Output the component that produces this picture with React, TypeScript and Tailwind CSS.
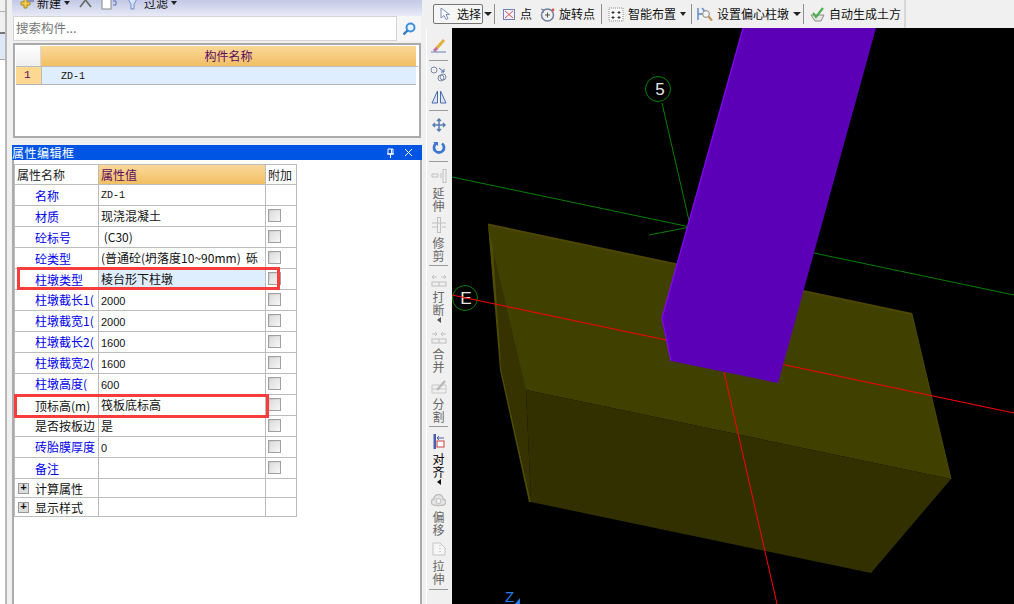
import type { ReactNode } from "react";

const cjk = "font-['Noto_Sans_CJK_SC','Liberation_Sans',sans-serif]";

interface Row {
  label: string;
  value?: string;
  h?: string;
  black?: boolean;
  low?: boolean;
  noCheck?: boolean;
  mono?: boolean;
  num?: boolean;
  selected?: boolean;
}

const rows: Row[] = [
  { label: "名称", value: "ZD-1", low: true, noCheck: true, mono: true },
  { label: "材质", value: "现浇混凝土", low: true },
  { label: "砼标号", value: " (C30)", low: true },
  { label: "砼类型", value: "(普通砼(坍落度10~90mm)  砾", low: true },
  { label: "柱墩类型", value: "棱台形下柱墩", low: true, selected: true },
  { label: "柱墩截长1(", value: "2000", num: true },
  { label: "柱墩截宽1(", value: "2000", num: true },
  { label: "柱墩截长2(", value: "1600", num: true },
  { label: "柱墩截宽2(", value: "1600", num: true },
  { label: "柱墩高度(", value: "600", num: true },
  { label: "顶标高(m)", value: "筏板底标高", black: true, low: true },
  { label: "是否按板边", value: "是", black: true },
  { label: "砖胎膜厚度", value: "0", num: true },
  { label: "备注", low: true },
];

function Check() {
  return (
    <span className="block w-[13px] h-[13px] border border-[#a0a0a0] bg-gradient-to-br from-[#c8c8c8] to-[#fafafa] p-[1px]">
      <span className="block w-full h-full bg-gradient-to-br from-[#dcdcdc] to-[#f4f4f4]" />
    </span>
  );
}

function PropRow({ row }: { row: Row }) {
  const labelColor = row.black ? "text-[#111]" : "text-[#0000ee]";
  return (
    <div className="grid grid-cols-[84px_167px_31px] h-[21px] border-b border-[#bcbcbc]">
      <div className={`pl-[20px] border-r border-[#bcbcbc] whitespace-nowrap overflow-hidden leading-[20px] ${labelColor} ${row.low ? "pt-[1px]" : ""}`}>
        {row.label}
      </div>
      <div
        className={`pl-[2px] border-r border-[#bcbcbc] whitespace-pre overflow-hidden leading-[20px] text-[#111] ${row.selected ? "bg-[#dfeeff]" : ""} ${row.num ? "font-['Liberation_Sans'] text-[11px] pt-[1px]" : ""} ${row.mono ? "font-['Liberation_Mono'] text-[10px] pt-[1px]" : ""}`}
      >
        {row.value}
      </div>
      <div className="border-r border-[#bcbcbc] pl-[2px] pt-[3px]">{row.noCheck ? null : <Check />}</div>
    </div>
  );
}

function GroupRow({ label }: { label: string }) {
  return (
    <div className="grid grid-cols-[84px_167px_31px] h-[19px] border-b border-[#bcbcbc]">
      <div className="flex items-center pl-[3px] border-r border-[#bcbcbc] text-[#111]">
        <span className="flex items-center justify-center w-[11px] h-[11px] border border-[#999] bg-[#dcdcdc] text-[11px] leading-none font-['Liberation_Mono'] font-bold">
          +
        </span>
        <span className="ml-[6px] mt-[1px]">{label}</span>
      </div>
      <div className="border-r border-[#bcbcbc]" />
      <div className="border-r border-[#bcbcbc]" />
    </div>
  );
}

function Sep() {
  return <div className="w-px h-[20px] bg-[#8f8f8f]" />;
}

function Caret({ className = "" }: { className?: string }) {
  return <span className={`block w-0 h-0 border-x-[3px] border-x-transparent border-t-[4px] border-t-[#222] ${className}`} />;
}

function Tool({ icon, label, mt, dark }: { icon: ReactNode; label?: string; mt: string; dark?: boolean }) {
  return (
    <div className={`flex flex-col items-center ${mt}`}>
      {icon}
      {label && (
        <div className={`w-[12px] mt-[3px] text-center leading-[13px] text-[12px] ${dark ? "text-black" : "text-[#666]"}`}>{label}</div>
      )}
    </div>
  );
}

function VSep({ mt }: { mt: string }) {
  return <div className={`w-[19px] h-px bg-[#9a9a9a] ${mt}`} />;
}

function Ico({ children, w = 16, h = 15 }: { children: ReactNode; w?: number; h?: number }) {
  return (
    <svg width={w} height={h} viewBox={`0 0 ${w} ${h}`} fill="none" className="block shrink-0">
      {children}
    </svg>
  );
}

function Scene() {
  return (
    <svg viewBox="452 28 562 576" width={562} height={576} className="block bg-black">
      <line x1="452" y1="177" x2="1014" y2="295" stroke="#008000" />
      <line x1="649" y1="235" x2="690" y2="227" stroke="#008000" />
      <line x1="662" y1="103" x2="690" y2="225" stroke="#008000" />
      <circle cx="658" cy="89" r="12.5" stroke="#008000" fill="none" />
      <circle cx="465" cy="298" r="12.5" stroke="#008000" fill="none" />
      <text x="660" y="95" fill="#e8e8e8" fontSize="17" textAnchor="middle" fontFamily="Liberation Sans">5</text>
      <text x="466" y="304" fill="#e8e8e8" fontSize="17" textAnchor="middle" fontFamily="Liberation Sans">E</text>

      <polygon points="488,224 912,314 951,479 526,390 501,367" fill="#404000" />
      <polygon points="526,390 951,479 871,573 531,502" fill="#333000" />
      <polygon points="493,250 526,390 531,502 501,367" fill="#363300" />
      <polygon points="488,224 493,250 501,367 531,502 529,502 500,370" fill="#4f4d00" />
      <polyline points="488,224.5 912,314" stroke="#4d4600" strokeWidth="2" fill="none" />
      <polyline points="912,314 951,479" stroke="#4a4a00" fill="none" />

      <line x1="452" y1="295" x2="1014" y2="413" stroke="#ff0000" />
      <line x1="724" y1="372" x2="777" y2="604" stroke="#ff0000" />

      <polygon points="743,28 876,28 778,383 671,361 662,318" fill="#5c00b8" />
      <polyline points="743,28 662,318 671,361" stroke="#8a00ff" strokeWidth="1.2" fill="none" />

      <text x="505" y="602" fill="#1e7ff0" fontSize="15" fontFamily="Liberation Sans">Z</text>
      <polygon points="520,598 520,604 515,604" fill="#1e7ff0" />
    </svg>
  );
}

export default function App() {
  return (
    <div className={`relative flex w-[1014px] h-[604px] overflow-hidden bg-[#f0f0f0] text-[12px] ${cjk}`}>
      {/* left strip */}
      <div className="w-[12px] flex flex-col shrink-0">
        <div className="flex h-full">
          <div className="w-[7px] flex flex-col border-r-2 border-[#b8b8b8]">
            <div className="h-[12px] bg-[#f0f0f0] border-b border-[#b0b0b0]" />
            <div className="h-[22px] bg-[#f0f0f0] border-b-2 border-[#777]" />
            <div className="h-[26px] bg-[#dfe6f5] border-b border-[#aaa]" />
            <div className="flex-1 bg-white" />
          </div>
          <div className="flex-1 bg-[#f0f0f0]" />
        </div>
      </div>

      {/* component list + properties */}
      <div className="w-[410px] shrink-0 flex flex-col">
        <div className="h-[16px] overflow-hidden bg-gradient-to-b from-[#c3c9e6] to-[#e8eaf6] shrink-0">
          <div className="flex items-center h-[16px] -mt-[5px] text-[#111] pl-[6px]">
            <Ico w={16} h={14}>
              <path d="M6 3h3v3h3v3H9v3H6V9H3V6h3z" fill="#f2c84a" stroke="#a98a22" />
              <path d="M9 5h7" stroke="#8a93b5" strokeWidth="2" />
            </Ico>
            <span className="ml-[3px]">新建</span>
            <Caret className="ml-[3px]" />
            <span className="ml-[9px]">
              <Ico w={13} h={12}>
                <path d="M1 10 6.5 3 12 10" stroke="#666" strokeWidth="1.6" />
              </Ico>
            </span>
            <span className="ml-[9px]">
              <Ico w={16} h={14}>
                <rect x="1" y="3" width="9" height="10" stroke="#888" fill="#fff" />
                <path d="M12 5h3v4h-3" stroke="#5a73c0" />
              </Ico>
            </span>
            <span className="ml-[10px]">
              <Ico w={11} h={14}>
                <path d="M1 3h9L7 8v5H4V8z" stroke="#6f8fd0" fill="#d8e4f8" />
              </Ico>
            </span>
            <span className="ml-[6px]">过滤</span>
            <Caret className="ml-[3px]" />
          </div>
        </div>

        <div className="h-[25px] flex shrink-0 pl-[1px] pr-[1px]">
          <div className="w-[384px] h-full bg-white border border-[#d4d4d4] pl-[2px] text-[#777] text-[12.5px] leading-[22px]">搜索构件...</div>
          <div className="flex-1 flex items-center justify-center bg-[#f6f6f6]">
            <svg width="14" height="14" viewBox="0 0 14 14" fill="none">
              <circle cx="8.5" cy="5.5" r="4" stroke="#3d8fe0" strokeWidth="2" fill="#e8f4ff" />
              <path d="M5.5 8.5 1.5 12.5" stroke="#2f78c8" strokeWidth="2.4" />
            </svg>
          </div>
        </div>

        <div className="h-[2px] shrink-0" />

        <div className="h-[95px] shrink-0 ml-[1px] w-[408px] bg-white border-2 border-[#ababab] p-[1px]">
          <div className="flex h-[21px] border-b border-[#bcbcbc]">
            <div className="w-[25px] border-r border-[#d8d8d8] bg-gradient-to-b from-[#ffffff] to-[#eeeeee]" />
            <div className="flex-1 bg-gradient-to-b from-[#fbd898] to-[#f1bf63] text-center leading-[19px] text-[#5c0a63] mr-[2px]">构件名称</div>
          </div>
          <div className="flex h-[18px] border-b border-[#b5b5b5] mr-[2px]">
            <div className="w-[25px] bg-[#fdd890] text-[#5c0a63] font-['Liberation_Mono'] text-[11px] leading-[17px] pl-[8px]">1</div>
            <div className="flex-1 bg-[#dfeeff] border-l border-[#bcbcbc] pl-[19px] font-['Liberation_Mono'] text-[10px] leading-[19px] text-[#111]">ZD-1</div>
          </div>
        </div>

        <div className="h-[7px] shrink-0" />

        <div className="h-[15px] shrink-0 bg-[#0055e5] text-white flex items-center pr-[9px]">
          <span className="tracking-[0.5px] leading-none">属性编辑框</span>
          <svg width="9" height="10" viewBox="0 0 9 10" fill="none" className="ml-auto">
            <path d="M2 1h5v5H2zM1 6h7M4.5 6v4M5.5 1v5" stroke="#fff" />
          </svg>
          <svg width="9" height="9" viewBox="0 0 9 9" fill="none" className="ml-[9px]">
            <path d="M1 1l7 7M8 1 1 8" stroke="#fff" />
          </svg>
        </div>

        <div className="flex-1 bg-white border-x-2 border-[#ababab] pt-[4px]">
          <div className="w-[283px] border-l border-t border-[#bcbcbc]">
            <div className="grid grid-cols-[84px_167px_31px] h-[20px] border-b border-[#bcbcbc]">
              <div className="pl-[2px] border-r border-[#bcbcbc] text-[#222] leading-[19px]">属性名称</div>
              <div className="pl-[2px] border-r border-[#bcbcbc] bg-gradient-to-b from-[#fbd898] to-[#f1bf63] text-[#5c0a63] leading-[19px]">属性值</div>
              <div className="pl-[2px] border-r border-[#bcbcbc] text-[#222] leading-[19px]">附加</div>
            </div>
            {rows.map((row) => (
              <PropRow key={row.label} row={row} />
            ))}
            <GroupRow label="计算属性" />
            <GroupRow label="显示样式" />
          </div>
        </div>
      </div>

      <div className="w-[4px] shrink-0 bg-[#f0f0f0]" />

      {/* right side */}
      <div className="flex-1 flex flex-col min-w-0">
        <div className="h-[28px] shrink-0 flex items-center text-[#111] whitespace-nowrap">
          <div className="w-[480px] h-[28px] flex items-center border-r-2 border-[#d6d6d6] pl-[7px]">
            <div className="flex items-center shrink-0 w-[50px] h-[20px] border border-[#777] rounded-[2px] bg-[#f6f6f6] pl-[6px]">
              <svg width="10" height="14" viewBox="0 0 10 14" fill="none" className="shrink-0">
                <path d="M1 1v10l3-2.5 2 4 2-1-2-4h3.5z" fill="#fff" stroke="#7d8fb8" />
              </svg>
              <span className="ml-[7px]">选择</span>
            </div>
            <Caret className="ml-[1px] mr-[1px] border-x-[4px]" />
            <span className="ml-[1px]"><Sep /></span>
            <span className="ml-[8px]">
              <Ico w={12} h={13}>
                <rect x="0.5" y="1.5" width="11" height="10" stroke="#7480b8" fill="#eef0fa" />
                <path d="M2 3l8 7M10 3l-8 7" stroke="#d85050" />
              </Ico>
            </span>
            <span className="ml-[5px]">点</span>
            <span className="ml-[8px]">
              <Ico w={15} h={15}>
                <circle cx="7.5" cy="8" r="6" stroke="#6f7f9f" strokeWidth="1.5" />
                <path d="M7.5 5.5v5M5 8h5" stroke="#555" />
                <path d="M1 2l3 1-1 3" stroke="#6f7f9f" />
                <circle cx="13" cy="3" r="1.4" fill="#d85050" />
              </Ico>
            </span>
            <span className="ml-[4px]">旋转点</span>
            <span className="ml-[6px]"><Sep /></span>
            <span className="ml-[6px]">
              <Ico w={16} h={15}>
                <rect x="1" y="1" width="14" height="13" stroke="#8a8a8a" strokeDasharray="1 1" fill="#f8f8f8" />
                <path d="M5 4v3M3.5 5.5h3M11 4v3M9.5 5.5h3M5 9v3M3.5 10.5h3M11 9v3M9.5 10.5h3" stroke="#333" />
              </Ico>
            </span>
            <span className="ml-[4px]">智能布置</span>
            <Caret className="ml-[4px]" />
            <span className="ml-[5px]"><Sep /></span>
            <span className="ml-[5px]">
              <Ico w={16} h={16}>
                <path d="M1 2v12M1 8h5M5 2l6 7" stroke="#5a83c8" strokeWidth="1.4" />
                <circle cx="9" cy="8" r="3.4" stroke="#888" fill="#f4f4f4" />
                <path d="M11.5 10.5l3.5 4" stroke="#c89050" strokeWidth="2" />
              </Ico>
            </span>
            <span className="ml-[4px]">设置偏心柱墩</span>
            <Caret className="ml-[4px] border-x-[4px]" />
            <span className="ml-[2px]"><Sep /></span>
            <span className="ml-[6px]">
              <Ico w={15} h={15}>
                <path d="M1 8l4 6h6l3-6z" stroke="#8a8a8a" fill="#e6e6e6" />
                <path d="M3 6l3 4 7-9" stroke="#4fb04f" strokeWidth="2.2" />
              </Ico>
            </span>
            <span className="ml-[4px]">自动生成土方</span>
          </div>
        </div>

        <div className="flex-1 flex min-h-0">
          <div className="w-[26px] shrink-0 bg-[#f0f0f0] flex flex-col items-center overflow-hidden border-l border-white pr-[2px]">
            <Tool
              mt="mt-[10px]"
              icon={
                <Ico w={17} h={15}>
                  <path d="M1 14h15" stroke="#6b7fb0" />
                  <path d="M6 11 14 2" stroke="#e0b040" strokeWidth="3" />
                  <path d="M4 13l3-3" stroke="#c070a0" strokeWidth="3" />
                </Ico>
              }
            />
            <VSep mt="mt-[7px]" />
            <Tool
              mt="mt-[5px]"
              icon={
                <Ico w={17} h={17}>
                  <circle cx="4" cy="4" r="3" stroke="#7a8aa8" />
                  <circle cx="11" cy="12" r="3" stroke="#7a8aa8" />
                  <circle cx="13" cy="11" r="3" stroke="#7a8aa8" />
                  <path d="M9 2l5 4M14 3v3h-3" stroke="#4a6db0" />
                </Ico>
              }
            />
            <Tool
              mt="mt-[7px]"
              icon={
                <Ico w={16} h={14}>
                  <path d="M6.5 1v12H1zM9.5 1v12H15z" stroke="#4a6db0" fill="#dfe7f6" />
                </Ico>
              }
            />
            <VSep mt="mt-[6px]" />
            <Tool
              mt="mt-[7px]"
              icon={
                <Ico w={14} h={14}>
                  <path d="M7 1v12M1 7h12M5 3l2-2 2 2M5 11l2 2 2-2M3 5 1 7l2 2M11 5l2 2-2 2" stroke="#5a7db0" strokeWidth="1.5" />
                </Ico>
              }
            />
            <Tool
              mt="mt-[8px]"
              icon={
                <Ico w={14} h={14}>
                  <path d="M4 3.5a5 5 0 1 0 6 0" stroke="#3d78d0" strokeWidth="2.8" />
                  <path d="M1 2h5v4z" fill="#3d78d0" />
                </Ico>
              }
            />
            <VSep mt="mt-[7px]" />
            <Tool
              mt="mt-[7px]"
              label="延伸"
              icon={
                <Ico w={16} h={14}>
                  <path d="M1 5h6v3H1zM10 4v5" stroke="#c0c0c0" />
                  <rect x="12" y="0.5" width="3" height="13" stroke="#c0c0c0" />
                </Ico>
              }
            />
            <Tool
              mt="mt-[5px]"
              label="修剪"
              icon={
                <Ico w={16} h={16}>
                  <path d="M1 6h14M1 10h6M11 10h4" stroke="#c0c0c0" />
                  <rect x="6.5" y="0.5" width="3" height="15" stroke="#c0c0c0" />
                </Ico>
              }
            />
            <VSep mt="mt-[3px]" />
            <Tool
              mt="mt-[8px]"
              label="打断"
              icon={
                <Ico w={16} h={13}>
                  <path d="M1 3h5M3 1 1 3l2 2M10 3h5M13 1l2 2-2 2" stroke="#c0c0c0" />
                  <rect x="1" y="8" width="14" height="4" stroke="#c0c0c0" />
                  <path d="M8 8v4" stroke="#c0c0c0" />
                </Ico>
              }
            />
            <span className="mt-[1px] w-0 h-0 border-y-[3px] border-y-transparent border-r-[4px] border-r-[#555]" />
            <Tool
              mt="mt-[8px]"
              label="合并"
              icon={
                <Ico w={16} h={13}>
                  <path d="M1 3h5M4 1l2 2-2 2M10 3h5M12 1l-2 2 2 2" stroke="#c0c0c0" />
                  <rect x="1" y="8" width="14" height="4" stroke="#c0c0c0" />
                  <path d="M8 8v4" stroke="#c0c0c0" />
                </Ico>
              }
            />
            <Tool
              mt="mt-[6px]"
              label="分割"
              icon={
                <Ico w={16} h={15}>
                  <path d="M1 14V6h14v8zM1 10h14" stroke="#c8c8c8" />
                  <path d="M6 11l8-9" stroke="#b8b8b8" strokeWidth="2.4" />
                </Ico>
              }
            />
            <VSep mt="mt-[3px]" />
            <Tool
              mt="mt-[7px]"
              dark
              label="对齐"
              icon={
                <Ico w={12} h={15}>
                  <rect x="0.5" y="0" width="2.5" height="15" fill="#4a5fa8" />
                  <rect x="4" y="7" width="7" height="6" stroke="#c84040" fill="#fff" />
                  <path d="M4 4h7M6 2 4 4l2 2" stroke="#4a5fa8" />
                </Ico>
              }
            />
            <span className="mt-[1px] w-0 h-0 border-y-[3px] border-y-transparent border-r-[4px] border-r-[#111]" />
            <Tool
              mt="mt-[9px]"
              label="偏移"
              icon={
                <Ico w={15} h={13}>
                  <path d="M1 10a3 3 0 0 1 2-5 4.5 4.5 0 0 1 9 0 3 3 0 0 1 2 5c0 2-13 2-13 0z" stroke="#bdbdbd" fill="#e4e4e4" strokeWidth="1.4" />
                  <circle cx="7.5" cy="7" r="2.5" stroke="#bdbdbd" fill="#f4f4f4" />
                </Ico>
              }
            />
            <Tool
              mt="mt-[6px]"
              label="拉伸"
              icon={
                <Ico w={14} h={14}>
                  <path d="M1 1h7l5 5v7H1z" stroke="#c4c4c4" fill="#f6f6f6" />
                  <path d="M8 3v9" stroke="#aaa" strokeDasharray="1 2" />
                </Ico>
              }
            />
            <VSep mt="mt-[4px]" />
          </div>
          <Scene />
        </div>
      </div>

      {/* red annotation boxes */}
      <div className="absolute left-[17px] top-[267px] w-[263px] h-[23px] border-[3px] border-[#f93c3c]" />
      <div className="absolute left-[14px] top-[394px] w-[255px] h-[24px] border-[3px] border-[#f93c3c]" />
    </div>
  );
}
